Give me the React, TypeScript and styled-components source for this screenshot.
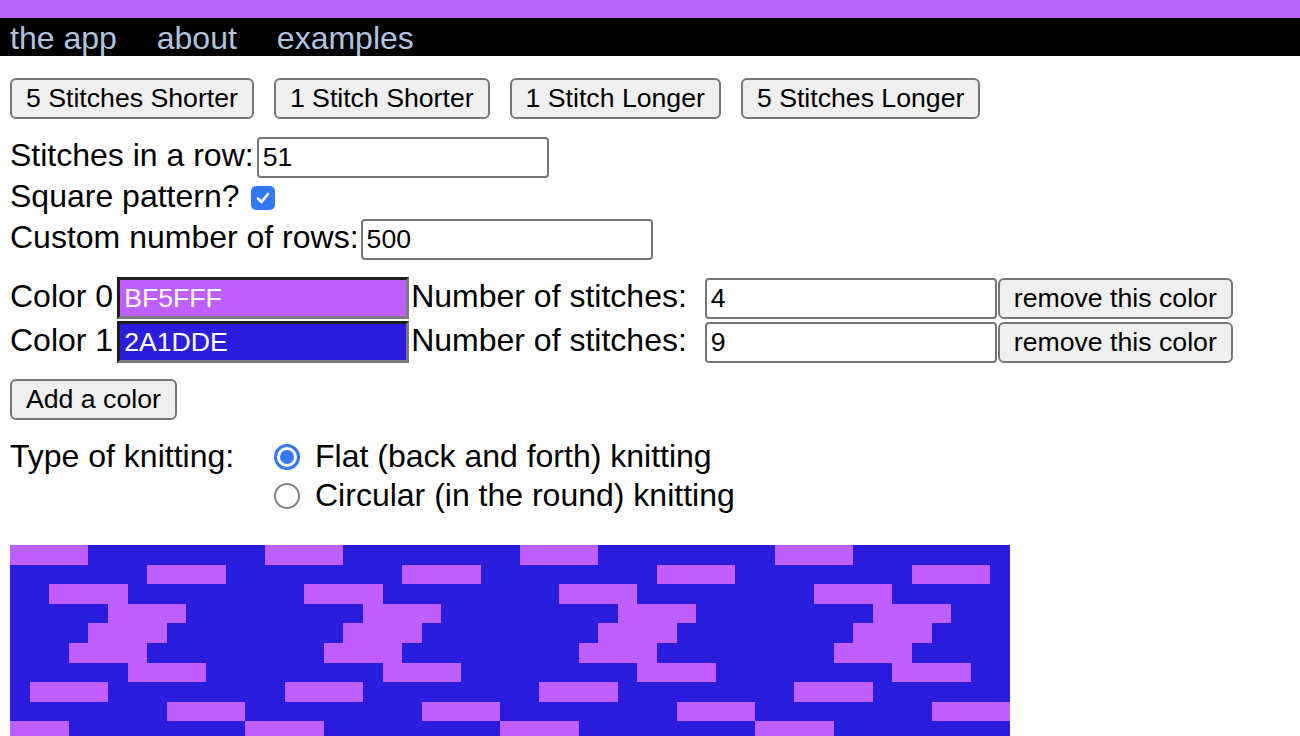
import React, { useMemo, useState } from 'react';
import styled, { createGlobalStyle } from 'styled-components';

const GlobalStyle = createGlobalStyle`
  body {
    margin: 0;
    background: #fff;
    color: #000;
    font-family: 'Liberation Sans', Arial, Helvetica, sans-serif;
    font-size: 32px;
  }
`;

const TopStripe = styled.div`
  height: 18px;
  background: #b865f8;
`;

const Nav = styled.nav`
  display: flex;
  align-items: center;
  gap: 40px;
  height: 38px;
  padding: 2px 10px 0;
  box-sizing: border-box;
  background: #000;
`;

const NavLink = styled.a`
  color: #b0c4de;
  font-size: 32px;
  line-height: 36px;
  text-decoration: none;
  cursor: pointer;
`;

const Main = styled.main`
  padding: 22px 10px 40px;
`;

const ButtonRow = styled.div`
  display: flex;
  gap: 20px;
  margin-bottom: 17px;
`;

const Button = styled.button<{ $ml?: number }>`
  flex: none;
  height: 41px;
  margin-left: ${({ $ml }) => $ml ?? 0}px;
  padding: 0 14px;
  border: 2px solid #767676;
  border-radius: 6px;
  background: #efefef;
  color: #000;
  font-family: inherit;
  font-size: 26.67px;
  line-height: 1;
  cursor: pointer;
`;

const FieldRow = styled.div<{ $h: number }>`
  display: flex;
  align-items: center;
  height: ${({ $h }) => $h}px;
  white-space: nowrap;
`;

const Label = styled.span`
  padding-bottom: 3px;
  line-height: 37px;
`;

const TextInput = styled.input<{ $ml: number }>`
  box-sizing: border-box;
  flex: none;
  width: 292px;
  height: 41px;
  margin-left: ${({ $ml }) => $ml}px;
  padding: 0 4px;
  border: 2px solid #767676;
  border-radius: 4px;
  color: #000;
  font-family: inherit;
  font-size: 26.67px;
  outline: none;
`;

const ColorField = styled.input<{ $bg: string }>`
  box-sizing: border-box;
  flex: none;
  width: 292px;
  height: 42px;
  margin: 0 2px 0 4px;
  padding: 0 4px;
  border: 3px solid;
  border-color: #1e1e1e #7a7a7a #7a7a7a #1e1e1e;
  background: ${({ $bg }) => $bg};
  color: #fff;
  font-family: inherit;
  font-size: 26.67px;
  outline: none;
`;

const ColorList = styled.div`
  margin-top: 16px;
`;

const CheckBox = styled.span<{ $on: boolean }>`
  box-sizing: border-box;
  display: inline-flex;
  align-items: center;
  justify-content: center;
  width: 24px;
  height: 24px;
  margin-left: 11px;
  border-radius: 5px;
  border: ${({ $on }) => ($on ? 'none' : '2px solid #767676')};
  background: ${({ $on }) => ($on ? '#3478f6' : '#fff')};
  cursor: pointer;
`;

const AddRow = styled.div`
  margin-top: 15px;
`;

const Knitting = styled.div`
  display: grid;
  grid-template-columns: 264px auto;
  margin-top: 17px;
`;

const KnitLabel = styled.div`
  line-height: 39px;
`;

const Options = styled.div`
  display: flex;
  flex-direction: column;
`;

const Option = styled.label`
  display: flex;
  align-items: center;
  height: 39px;
  gap: 15px;
  cursor: pointer;
`;

const Radio = styled.span<{ $on: boolean }>`
  box-sizing: border-box;
  display: inline-flex;
  align-items: center;
  justify-content: center;
  width: 26px;
  height: 26px;
  border-radius: 50%;
  border: ${({ $on }) => ($on ? '3px solid #3478f6' : '2px solid #808080')};
  background: #fff;

  &::after {
    content: '';
    display: ${({ $on }) => ($on ? 'block' : 'none')};
    width: 14px;
    height: 14px;
    border-radius: 50%;
    background: #3478f6;
  }
`;

const PatternSvg = styled.svg`
  display: block;
  margin-top: 30px;
`;

type Yarn = { hex: string; count: number };

function Pattern({ stitches, rows, yarns, flat, square }: {
  stitches: number;
  rows: number;
  yarns: Yarn[];
  flat: boolean;
  square: boolean;
}) {
  const seq = useMemo(() => yarns.flatMap(y => Array(Math.max(0, y.count)).fill(y.hex) as string[]), [yarns]);

  // one rect per run of same-coloured stitches; odd rows run backwards when knitting flat
  const rects = useMemo(() => {
    const out: React.ReactElement[] = [];
    if (!seq.length || stitches <= 0) return out;
    for (let r = 0; r < rows; r++) {
      let start = 0;
      let prev: string | null = null;
      for (let c = 0; c <= stitches; c++) {
        let col: string | null = null;
        if (c < stitches) {
          const i = flat && r % 2 === 1 ? r * stitches + (stitches - 1 - c) : r * stitches + c;
          col = seq[i % seq.length];
        }
        if (col !== prev) {
          if (prev !== null) {
            out.push(<rect key={`${r}-${start}`} x={start} y={r} width={c - start} height={1} fill={`#${prev}`} />);
          }
          start = c;
          prev = col;
        }
      }
    }
    return out;
  }, [seq, stitches, rows, flat]);

  const width = 1000;
  const cell = stitches > 0 ? width / stitches : 0;
  const rowH = square ? cell : cell * 0.8;

  return (
    <PatternSvg
      width={width}
      height={rows * rowH}
      viewBox={`0 0 ${Math.max(stitches, 1)} ${Math.max(rows, 1)}`}
      preserveAspectRatio="none"
      shapeRendering="crispEdges"
    >
      {rects}
    </PatternSvg>
  );
}

export default function App() {
  const [stitches, setStitches] = useState(51);
  const [square, setSquare] = useState(true);
  const [rows, setRows] = useState(500);
  const [yarns, setYarns] = useState<Yarn[]>([
    { hex: 'BF5FFF', count: 4 },
    { hex: '2A1DDE', count: 9 },
  ]);
  const [flat, setFlat] = useState(true);

  const bump = (n: number) => setStitches(s => Math.max(1, s + n));

  const updateYarn = (i: number, patch: Partial<Yarn>) =>
    setYarns(list => list.map((y, j) => (j === i ? { ...y, ...patch } : y)));

  return (
    <>
      <GlobalStyle />
      <TopStripe />
      <Nav>
        <NavLink>the app</NavLink>
        <NavLink>about</NavLink>
        <NavLink>examples</NavLink>
      </Nav>

      <Main>
        <ButtonRow>
          <Button onClick={() => bump(-5)}>5 Stitches Shorter</Button>
          <Button onClick={() => bump(-1)}>1 Stitch Shorter</Button>
          <Button onClick={() => bump(1)}>1 Stitch Longer</Button>
          <Button onClick={() => bump(5)}>5 Stitches Longer</Button>
        </ButtonRow>

        <FieldRow $h={42}>
          <Label>Stitches in a row:</Label>
          <TextInput $ml={3} value={stitches} onChange={e => setStitches(parseInt(e.target.value) || 0)} />
        </FieldRow>
        <FieldRow $h={40}>
          <Label>Square pattern?</Label>
          <CheckBox $on={square} role="checkbox" aria-checked={square} onClick={() => setSquare(v => !v)}>
            {square && (
              <svg width="16" height="16" viewBox="0 0 16 16">
                <path d="M3 8.5 L6.5 12 L13 4" fill="none" stroke="#fff" strokeWidth="2.6" strokeLinecap="round" strokeLinejoin="round" />
              </svg>
            )}
          </CheckBox>
        </FieldRow>
        <FieldRow $h={42}>
          <Label>Custom number of rows:</Label>
          <TextInput $ml={2} value={rows} onChange={e => setRows(parseInt(e.target.value) || 0)} />
        </FieldRow>

        <ColorList>
          {yarns.map((y, i) => (
            <FieldRow $h={44} key={i}>
              <Label>Color {i}</Label>
              <ColorField $bg={`#${y.hex}`} value={y.hex} onChange={e => updateYarn(i, { hex: e.target.value })} />
              <Label>Number of stitches:</Label>
              <TextInput $ml={18} value={y.count} onChange={e => updateYarn(i, { count: parseInt(e.target.value) || 0 })} />
              <Button $ml={1} onClick={() => setYarns(list => list.filter((_, j) => j !== i))}>remove this color</Button>
            </FieldRow>
          ))}
        </ColorList>

        <AddRow>
          <Button onClick={() => setYarns(list => [...list, { hex: 'FFFFFF', count: 1 }])}>Add a color</Button>
        </AddRow>

        <Knitting>
          <KnitLabel>Type of knitting:</KnitLabel>
          <Options>
            <Option onClick={() => setFlat(true)}>
              <Radio $on={flat} />
              Flat (back and forth) knitting
            </Option>
            <Option onClick={() => setFlat(false)}>
              <Radio $on={!flat} />
              Circular (in the round) knitting
            </Option>
          </Options>
        </Knitting>

        <Pattern stitches={stitches} rows={rows} yarns={yarns} flat={flat} square={square} />
      </Main>
    </>
  );
}
